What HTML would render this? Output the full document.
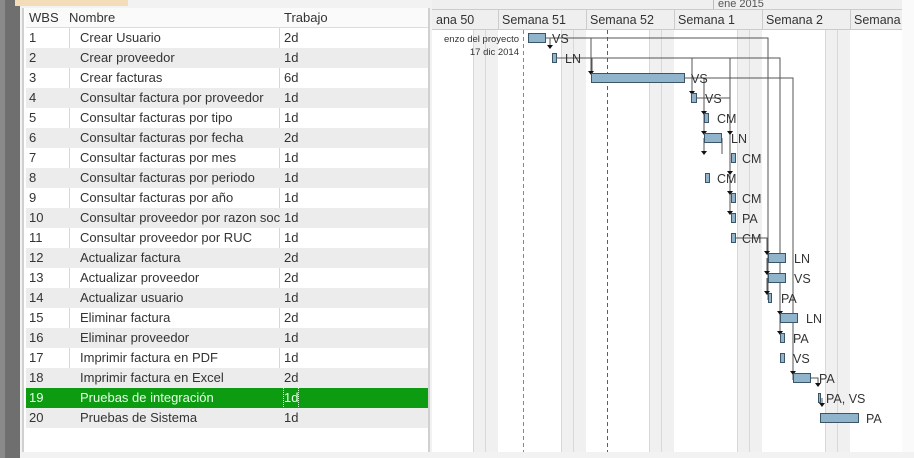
<!DOCTYPE html>
<html><head><meta charset="utf-8"><style>
*{margin:0;padding:0;box-sizing:border-box}
body{width:914px;height:458px;overflow:hidden;background:#f2f2f2;font-family:"Liberation Sans",sans-serif;font-size:13px;color:#333;position:relative}
.strip{position:absolute;left:0;top:0;width:20px;height:458px;background:#6f6f6f}
.strip2{position:absolute;left:0;top:0;width:5px;height:458px;background:#8a8a8a}
.tab{position:absolute;left:15px;top:0;width:113px;height:6px;background:#f3dcb8}
.tbl{position:absolute;left:22px;top:8px;width:408px;height:444px;background:#fff;border-left:2px solid #d0d0d0;border-right:2px solid #d0d0d0}
.row{position:absolute;left:2px;width:402px;height:20px;line-height:20px;white-space:nowrap;overflow:hidden}
.row span{position:absolute;top:0}
.a{left:3px}.b{left:54px;width:201px;overflow:hidden}.c{left:258px}
.hdr{top:0;background:#fafafa;border-bottom:1px solid #ddd}
.hdr .b{left:43px}
.alt{background:#ececec}
.sel{background:#0d9b12;color:#e8ffe8}
.vl{position:absolute;top:0;width:1px;height:420px;background:#d6d6d6}
</style></head><body>
<div class="strip"></div><div class="strip2"></div><div class="tab"></div>
<div style="position:absolute;left:902px;top:0;width:12px;height:452px;background:#fafafa"></div>
<div class="tbl">
<div class="vl" style="left:45px"></div><div class="vl" style="left:255px"></div>
<div class="row hdr"><span class="a">WBS</span><span class="b">Nombre</span><span class="c">Trabajo</span></div>
<div class="row" style="top:20px"><span class="a">1</span><span class="b">Crear Usuario</span><span class="c">2d</span></div>
<div class="row alt" style="top:40px"><span class="a">2</span><span class="b">Crear proveedor</span><span class="c">1d</span></div>
<div class="row" style="top:60px"><span class="a">3</span><span class="b">Crear facturas</span><span class="c">6d</span></div>
<div class="row alt" style="top:80px"><span class="a">4</span><span class="b">Consultar factura por proveedor</span><span class="c">1d</span></div>
<div class="row" style="top:100px"><span class="a">5</span><span class="b">Consultar facturas por tipo</span><span class="c">1d</span></div>
<div class="row alt" style="top:120px"><span class="a">6</span><span class="b">Consultar facturas por fecha</span><span class="c">2d</span></div>
<div class="row" style="top:140px"><span class="a">7</span><span class="b">Consultar facturas por mes</span><span class="c">1d</span></div>
<div class="row alt" style="top:160px"><span class="a">8</span><span class="b">Consultar facturas por periodo</span><span class="c">1d</span></div>
<div class="row" style="top:180px"><span class="a">9</span><span class="b">Consultar facturas por año</span><span class="c">1d</span></div>
<div class="row alt" style="top:200px"><span class="a">10</span><span class="b">Consultar proveedor por razon social</span><span class="c">1d</span></div>
<div class="row" style="top:220px"><span class="a">11</span><span class="b">Consultar proveedor por RUC</span><span class="c">1d</span></div>
<div class="row alt" style="top:240px"><span class="a">12</span><span class="b">Actualizar factura</span><span class="c">2d</span></div>
<div class="row" style="top:260px"><span class="a">13</span><span class="b">Actualizar proveedor</span><span class="c">2d</span></div>
<div class="row alt" style="top:280px"><span class="a">14</span><span class="b">Actualizar usuario</span><span class="c">1d</span></div>
<div class="row" style="top:300px"><span class="a">15</span><span class="b">Eliminar factura</span><span class="c">2d</span></div>
<div class="row alt" style="top:320px"><span class="a">16</span><span class="b">Eliminar proveedor</span><span class="c">1d</span></div>
<div class="row" style="top:340px"><span class="a">17</span><span class="b">Imprimir factura en PDF</span><span class="c">1d</span></div>
<div class="row alt" style="top:360px"><span class="a">18</span><span class="b">Imprimir factura en Excel</span><span class="c">2d</span></div>
<div class="row sel" style="top:380px"><span class="a">19</span><span class="b">Pruebas de integración</span><span class="c" style="outline:1px dotted #cfc">1d</span></div>
<div class="row alt" style="top:400px"><span class="a">20</span><span class="b">Pruebas de Sistema</span><span class="c">1d</span></div>
</div>
<svg style="position:absolute;left:0;top:0" width="914" height="458" font-family="Liberation Sans, sans-serif">
<rect x="432" y="0" width="470" height="452" fill="#fff"/>
<rect x="432" y="0" width="470" height="30" fill="#efefef"/>
<line x1="432" y1="9.5" x2="902" y2="9.5" stroke="#ccc"/>
<line x1="432" y1="29.5" x2="902" y2="29.5" stroke="#ccc"/>
<line x1="713.5" y1="0" x2="713.5" y2="9" stroke="#bbb"/>
<text x="718" y="7" font-size="11" fill="#555">ene 2015</text>
<g fill="#f0f0f0">
<rect x="473" y="30" width="25" height="422"/><rect x="561" y="30" width="25" height="422"/>
<rect x="649" y="30" width="25" height="422"/><rect x="737" y="30" width="25" height="422"/>
<rect x="825" y="30" width="25" height="422"/>
</g>
<g stroke="#d8d8d8">
<line x1="473.5" y1="30" x2="473.5" y2="452"/><line x1="485.5" y1="30" x2="485.5" y2="452"/>
<line x1="561.5" y1="30" x2="561.5" y2="452"/><line x1="573.5" y1="30" x2="573.5" y2="452"/>
<line x1="649.5" y1="30" x2="649.5" y2="452"/><line x1="661.5" y1="30" x2="661.5" y2="452"/>
<line x1="737.5" y1="30" x2="737.5" y2="452"/><line x1="749.5" y1="30" x2="749.5" y2="452"/>
<line x1="825.5" y1="30" x2="825.5" y2="452"/><line x1="837.5" y1="30" x2="837.5" y2="452"/>
</g>
<g stroke="#ccc">
<line x1="498.5" y1="10" x2="498.5" y2="30"/><line x1="586.5" y1="10" x2="586.5" y2="30"/>
<line x1="674.5" y1="10" x2="674.5" y2="30"/><line x1="762.5" y1="10" x2="762.5" y2="30"/>
<line x1="850.5" y1="10" x2="850.5" y2="30"/>
</g>
<g font-size="12.5" fill="#333">
<text x="436" y="24">ana 50</text><text x="502" y="24">Semana 51</text><text x="590" y="24">Semana 52</text>
<text x="678" y="24">Semana 1</text><text x="766" y="24">Semana 2</text><text x="854" y="24">Semana</text>
</g>
<line x1="523.5" y1="30" x2="523.5" y2="452" stroke="#888" stroke-dasharray="4,3"/>
<line x1="607.5" y1="30" x2="607.5" y2="452" stroke="#4060a0" stroke-dasharray="4,3"/>
<text x="519" y="42" font-size="9.5" text-anchor="end" fill="#333">enzo del proyecto</text>
<text x="519" y="55" font-size="9.5" text-anchor="end" fill="#333">17 dic 2014</text>
<g stroke="#555" fill="none">
<path d="M545 38H768V300M557 58H780V320M684 78H793V380M696 98H730"/>
<path d="M550 38V46M591 38V74M592 58V74M692 58V94M704 78V114M704 98V134M704 138V154M730 58V214M730 178V194M730 198V214M722 138V154M735 238H767V254M767 258V274M767 278V294M780 298V314M780 318V334M793 320V374M810 378H818V386M822 398V406"/>
</g>
<g fill="#111">
<path d="M547 45h6l-3 4z"/><path d="M588 71h6l-3 4z"/><path d="M689 91h6l-3 4z"/><path d="M701 111h6l-3 4z"/><path d="M701 131h6l-3 4z"/><path d="M701 151h6l-3 4z"/><path d="M727 131h6l-3 4z"/><path d="M727 171h6l-3 4z"/><path d="M727 191h6l-3 4z"/><path d="M727 211h6l-3 4z"/><path d="M764 251h6l-3 4z"/><path d="M764 271h6l-3 4z"/><path d="M764 291h6l-3 4z"/><path d="M777 311h6l-3 4z"/><path d="M777 331h6l-3 4z"/><path d="M790 371h6l-3 4z"/><path d="M815 383h6l-3 4z"/><path d="M819 403h6l-3 4z"/>
</g>
<g fill="#8fb4cc" stroke="#3c5566">
<rect x="528.5" y="33.5" width="17" height="9"/>
<rect x="552.5" y="53.5" width="4" height="9"/>
<rect x="591.5" y="73.5" width="93" height="9"/>
<rect x="691.5" y="93.5" width="5" height="9"/>
<rect x="704.5" y="113.5" width="4" height="9"/>
<rect x="704.5" y="133.5" width="17" height="9"/>
<rect x="731.5" y="153.5" width="4" height="9"/>
<rect x="705.5" y="173.5" width="4" height="9"/>
<rect x="731.5" y="193.5" width="4" height="9"/>
<rect x="731.5" y="213.5" width="4" height="9"/>
<rect x="731.5" y="233.5" width="4" height="9"/>
<rect x="768.5" y="253.5" width="17" height="9"/>
<rect x="768.5" y="273.5" width="17" height="9"/>
<rect x="768.5" y="293.5" width="3" height="9"/>
<rect x="780.5" y="313.5" width="17" height="9"/>
<rect x="780.5" y="333.5" width="4" height="9"/>
<rect x="780.5" y="353.5" width="4" height="9"/>
<rect x="793.5" y="373.5" width="17" height="9"/>
<rect x="818.5" y="393.5" width="2" height="9"/>
<rect x="820.5" y="413.5" width="38" height="9"/>
</g>
<g font-size="12.5" fill="#333">
<text x="552" y="43">VS</text><text x="565" y="63">LN</text><text x="691" y="83">VS</text>
<text x="705" y="103">VS</text><text x="717" y="123">CM</text><text x="731" y="143">LN</text>
<text x="742" y="163">CM</text><text x="717" y="183">CM</text><text x="742" y="203">CM</text>
<text x="742" y="223">PA</text><text x="742" y="243">CM</text><text x="794" y="263">LN</text>
<text x="794" y="283">VS</text><text x="781" y="303">PA</text><text x="806" y="323">LN</text>
<text x="793" y="343">PA</text><text x="793" y="363">VS</text><text x="819" y="383">PA</text>
<text x="826" y="403">PA, VS</text><text x="866" y="423">PA</text>
</g>
</svg>
</body></html>
